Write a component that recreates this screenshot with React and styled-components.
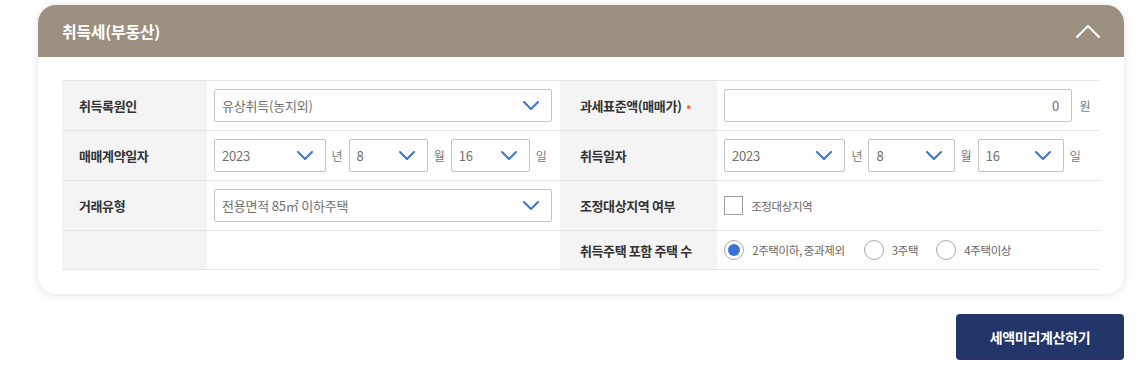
import React from 'react';
import styled, { createGlobalStyle } from 'styled-components';

const GlobalStyle = createGlobalStyle`
  html, body {
    margin: 0;
    padding: 0;
    background: #fff;
  }
  body {
    font-family: "Noto Sans CJK KR", "Noto Sans", sans-serif;
    color: #333;
  }
`;

const Page = styled.div`
  width: 1086px;
  margin-left: 38px;
  padding-top: 5px;
`;

const Card = styled.section`
  background: #fff;
  border-radius: 18px;
  box-shadow: 0 1px 9px rgba(0, 0, 0, 0.12);
  overflow: hidden;
`;

const Header = styled.div`
  height: 52px;
  background: #9b907f;
  display: flex;
  align-items: center;
  justify-content: space-between;
  padding: 0 24px;
  color: #fff;
`;

const Title = styled.h2`
  margin: 0;
  font-size: 16px;
  font-weight: 700;
  letter-spacing: -0.3px;
`;

const Body = styled.div`
  padding: 23px 24px 24px;
`;

const Table = styled.div`
  display: grid;
  grid-template-columns: 145px 353px 157px 1fr;
  border-top: 1px solid #e6e6e6;
`;

const Label = styled.div`
  background: #f4f4f4;
  height: ${p => p.$h || 49}px;
  border-bottom: 1px solid #e6e6e6;
  display: flex;
  align-items: center;
  padding-left: ${p => p.$pl || 17}px;
  font-size: 13px;
  font-weight: 700;
  color: #333;
  letter-spacing: -0.4px;
`;

const Cell = styled.div`
  height: ${p => p.$h || 49}px;
  border-bottom: 1px solid #e6e6e6;
  display: flex;
  align-items: center;
  padding: 0 8px 0 7px;
  gap: 6px;
`;

const Required = styled.span`
  color: #f26b2d;
  margin-left: 5px;
  font-size: 12px;
`;

const Box = styled.div`
  box-sizing: border-box;
  height: 33px;
  width: ${p => p.$w || '100%'};
  flex: ${p => (p.$grow ? 1 : 'none')};
  border: 1px solid #c4c4c4;
  border-radius: 2px;
  display: flex;
  align-items: center;
  justify-content: ${p => (p.$right ? 'flex-end' : 'space-between')};
  padding: 0 12px 0 7px;
  font-size: 13px;
  color: #707070;
  background: #fff;
  letter-spacing: -0.2px;
`;

const Unit = styled.span`
  font-size: 12px;
  color: #777;
  flex: none;
  width: ${p => p.$w || 'auto'};
  text-align: center;
`;

const Check = styled.span`
  box-sizing: border-box;
  width: 19px;
  height: 19px;
  border: 1px solid #9d9d9d;
  background: #fff;
  flex: none;
`;

const SmallText = styled.span`
  font-size: 11.5px;
  color: #666;
  letter-spacing: -0.4px;
  margin-right: ${p => p.$mr || 0}px;
`;

const Radio = styled.span`
  box-sizing: border-box;
  width: 20px;
  height: 20px;
  border-radius: 50%;
  border: 1px solid #a8a8a8;
  background: #fff;
  flex: none;
  display: flex;
  align-items: center;
  justify-content: center;
  &::after {
    content: '';
    width: 12px;
    height: 12px;
    border-radius: 50%;
    background: ${p => (p.$on ? '#3a72d6' : 'transparent')};
  }
`;

const Actions = styled.div`
  display: flex;
  justify-content: flex-end;
  margin-top: 20px;
`;

const Button = styled.button`
  width: 168px;
  height: 46px;
  border: none;
  border-radius: 4px;
  background: #233669;
  color: #fff;
  font-family: inherit;
  font-size: 14px;
  font-weight: 700;
  letter-spacing: -0.3px;
`;

const Chevron = ({ up, color = '#3b74cf', w = 16, h = 9, sw = 2 }) => (
  <svg width={w} height={h} viewBox={`0 0 ${w} ${h}`} fill="none">
    <path
      d={up ? `M1 ${h - 1} L${w / 2} 1 L${w - 1} ${h - 1}` : `M1 1 L${w / 2} ${h - 1} L${w - 1} 1`}
      stroke={color}
      strokeWidth={sw}
      strokeLinecap="round"
      strokeLinejoin="round"
    />
  </svg>
);

const Select = ({ value, w, grow }) => (
  <Box $w={w} $grow={grow}>
    <span>{value}</span>
    <Chevron />
  </Box>
);

const DateRow = () => (
  <>
    <Select value="2023" w="33%" />
    <Unit>년</Unit>
    <Select value="8" w="23.4%" />
    <Unit>월</Unit>
    <Select value="16" w="23.4%" />
    <Unit>일</Unit>
  </>
);

export default function App() {
  return (
    <>
      <GlobalStyle />
      <Page>
        <Card>
          <Header>
            <Title>취득세(부동산)</Title>
            <Chevron up color="#fff" w={24} h={13} sw={2.2} />
          </Header>
          <Body>
            <Table>
              <Label>취득록원인</Label>
              <Cell>
                <Select value="유상취득(농지외)" />
              </Cell>
              <Label $pl={20}>
                과세표준액(매매가)<Required>•</Required>
              </Label>
              <Cell>
                <Box $grow $right>0</Box>
                <Unit $w="14px">원</Unit>
              </Cell>

              <Label>매매계약일자</Label>
              <Cell>
                <DateRow />
              </Cell>
              <Label $pl={20}>취득일자</Label>
              <Cell>
                <DateRow />
              </Cell>

              <Label>거래유형</Label>
              <Cell>
                <Select value="전용면적 85㎡ 이하주택" />
              </Cell>
              <Label $pl={20}>조정대상지역 여부</Label>
              <Cell>
                <Check />
                <SmallText>&nbsp;조정대상지역</SmallText>
              </Cell>

              <Label $h={38} />
              <Cell $h={38} />
              <Label $h={38} $pl={20}>취득주택 포함 주택 수</Label>
              <Cell $h={38}>
                <Radio $on />
                <SmallText $mr={13}>&nbsp;2주택이하, 중과제외</SmallText>
                <Radio />
                <SmallText $mr={12}>&nbsp;3주택</SmallText>
                <Radio />
                <SmallText>&nbsp;4주택이상</SmallText>
              </Cell>
            </Table>
          </Body>
        </Card>
        <Actions>
          <Button>세액미리계산하기</Button>
        </Actions>
      </Page>
    </>
  );
}
